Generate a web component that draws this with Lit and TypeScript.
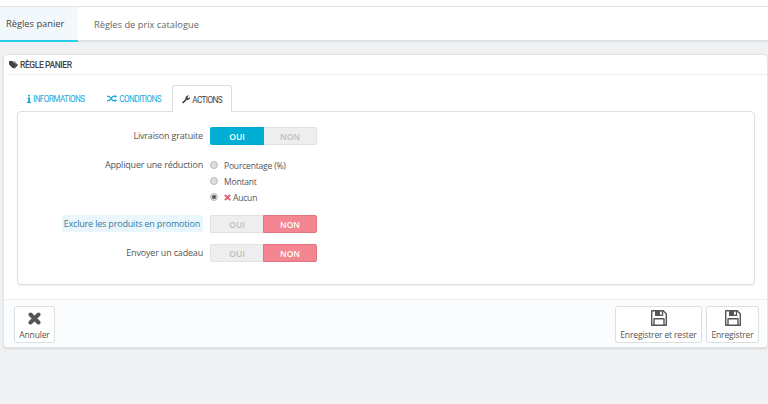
import { LitElement, html, css, svg } from "lit";
import { customElement } from "lit/decorators.js";

const floppy = svg`<svg class="ic" viewBox="0 0 16 16" width="16" height="16"><path fill="none" stroke="#555" stroke-width="1.400" stroke-linejoin="round" d="M.7.7h11.500l3.100 3.100v11.500H.7zM3 15.300V8.700h10v6.600"/><path fill="#555" fill-rule="evenodd" d="M4 0h8.200v6H4zM9 1.300v3.400h1.800V1.300z"/></svg>`;

@customElement("app-root")
export class AppRoot extends LitElement {
  static styles = css`
    :host { display: block; width: 768px; height: 404px; background: #eff1f2; font-family: "Open Sans", sans-serif; font-size: 9px; color: #555; overflow: hidden; }
    * { box-sizing: border-box; }
    .topbar { height: 42px; background: #fff; padding-top: 6px; }
    .pagetabs { height: 36px; display: flex; border-top: 1px solid #e3e5e6; border-bottom: 2px solid #dfe1e2; }
    .pt { height: 35px; padding: 0 15px 0 6px; display: flex; align-items: center; white-space: nowrap; font-size: 9.300px; color: #555; }
    .pt.on { width: 78px; background: #f2f8fb; border-bottom: 2px solid #25d0ea; color: #444; }
    .pt.off { padding-left: 16px; color: #666; }
    .wrap { padding: 12px 0 0 3px; }
    .panel { width: 765px; height: 294px; background: #fff; border: 1px solid #e2e4e5; border-radius: 4px; box-shadow: 0 1px 2px rgba(0,0,0,.12); display: flex; flex-direction: column; }
    .phead { height: 20px; margin: 0 0 0 5px; border-bottom: 1px solid #eee; display: flex; align-items: center; gap: 1px; font-family: Roboto, sans-serif; font-size: 8.500px; font-weight: 500; letter-spacing: -.4px; color: #444; }
    .tabs { display: flex; margin: 10px 0 0 13px; height: 26px; align-items: stretch; }
    .tab { display: flex; align-items: center; gap: 2px; padding: 1px 11px 0 12px; font-family: Roboto, sans-serif; font-size: 8.200px; letter-spacing: -.6px; color: #25a9dc; white-space: nowrap; }
    .tab.i { padding: 1px 11px 0 10px; width: 79px; }
    .tab.c { width: 76px; padding-left: 11px; }
    .tab.on { background: #fff; border: 1px solid #dcdfe0; border-bottom: none; border-radius: 3px 3px 0 0; color: #444; padding: 1px 9px 0; width: 60px; position: relative; z-index: 1; margin-bottom: -1px; height: 27px; }
    .box { margin: 0 0 0 13px; width: 738px; height: 174px; border: 1px solid #dcdfe0; border-radius: 4px; box-shadow: 0 1px 1px rgba(0,0,0,.06); padding-top: 15px; }
    .row { display: grid; grid-template-columns: 185px 1fr; column-gap: 7px; align-items: start; }
    .lab { text-align: right; font-size: 9px; letter-spacing: -.18px; line-height: 18px; color: #555; }
    .lab.t { line-height: 16px; }
    .lab span.h { background: #e9f6fb; color: #3a7aa0; padding: 2px 3px 2px 2px; border-radius: 2px; }
    .mt12 { margin-top: 12px; } .mt10 { margin-top: 10px; } .mt11 { margin-top: 11px; }
    .sw { display: flex; width: 107px; height: 18px; border-radius: 2px; font-size: 8.500px; font-weight: 600; }
    .sw div { flex: 1; display: flex; align-items: center; justify-content: center; }
    .offc { background: #eeeeee; color: #bdbdbd; border: 1px solid #e2e2e2; }
    .offc.l { border-radius: 2px 0 0 2px; border-right: none; }
    .offc.rt { border-radius: 0 2px 2px 0; border-left: none; }
    .sw .yes { flex: 0 0 54px; background: #00aed6; color: #fff; border-radius: 2px 0 0 2px; }
    .no { background: #f38690; color: #fff; border: 1px solid #e2737d; border-radius: 0 2px 2px 0; }
    .radios { display: flex; flex-direction: column; }
    .radio { height: 16px; display: flex; align-items: center; font-size: 8.500px; letter-spacing: -.18px; color: #555; }
    .dot { width: 8px; height: 8px; border-radius: 50%; background: #ddd; border: 1px solid #bbb; margin-right: 6px; flex: none; display: flex; align-items: center; justify-content: center; }
    .dot.c::after { content: ""; width: 4px; height: 4px; border-radius: 50%; background: #555; }
    .x { display: block; margin-right: 2px; }
    .foot { margin-top: 14px; flex: 1; background: #fbfcfd; border-top: 1px solid #eceeef; border-radius: 0 0 4px 4px; padding: 6px 8px 0 10px; display: flex; gap: 4px; }
    .btn { height: 37px; background: #fff; border: 1px solid #dcdfe0; border-radius: 3px; display: flex; flex-direction: column; align-items: center; justify-content: flex-end; padding-bottom: 1px; font-size: 8.500px; letter-spacing: -.15px; color: #555; line-height: 12px; white-space: nowrap; }
    .w41 { width: 41px; } .w87 { width: 87px; } .w53 { width: 53px; }
    .ic { display: block; margin-bottom: 3px; }
    .cancel { display: block; margin-bottom: 4px; }
    .spacer { flex: 1; }
  `;
  render() {
    return html`
      <div class="topbar"><div class="pagetabs"><div class="pt on">Règles panier</div><div class="pt off">Règles de prix catalogue</div></div></div>
      <div class="wrap"><div class="panel">
        <div class="phead">
          <svg viewBox="0 0 10 8" width="10" height="8"><path fill="#444" d="M0 0h3.500l4 4-3.500 3.500-4-4zM5 0l4 4-3.500 3.700-.7-.7L7.500 4 4.500 0z"/></svg>
          RÈGLE PANIER
        </div>
        <div class="tabs">
          <div class="tab i"><svg viewBox="0 0 4 8" width="4" height="8"><path fill="#25a9dc" d="M1 0h2v1.600H1zM.5 2.500H3v4.300h1V8H0V6.800h1V3.700H.5z"/></svg>INFORMATIONS</div>
          <div class="tab c"><svg viewBox="0 0 12 9" width="11" height="9"><path fill="none" stroke="#25a9dc" stroke-width="1.700" d="M0 2h2.500l4.500 5h2.500M0 7h2.500l4.500-5h2.500"/><path fill="#25a9dc" d="M9 0l3 2-3 2zM9 5l3 2-3 2z"/></svg>CONDITIONS</div>
          <div class="tab on"><svg viewBox="0 0 10 10" width="9" height="9"><path fill="#444" d="M0 8.500 4.200 4.300C3.800 2.500 5 .3 7.500 0c.7 0 1 .1 1.200.2L6.800 2l.2 1.200 1.200.3L10 1.700c.3 2.500-2 4.500-4.200 3.900L1.500 10z"/></svg>ACTIONS</div>
        </div>
        <div class="box">
          <div class="row"><div class="lab">Livraison gratuite</div><div class="sw"><div class="yes">OUI</div><div class="offc rt">NON</div></div></div>
          <div class="row mt12"><div class="lab t">Appliquer une réduction</div><div class="radios">
            <div class="radio"><span class="dot"></span>Pourcentage (%)</div>
            <div class="radio"><span class="dot"></span>Montant</div>
            <div class="radio"><span class="dot c"></span><svg class="x" viewBox="0 0 8 8" width="7" height="7"><path fill="none" stroke="#e4606d" stroke-width="2.200" d="M1 1l6 6M7 1 1 7"/></svg>Aucun</div>
          </div></div>
          <div class="row mt10"><div class="lab"><span class="h">Exclure les produits en promotion</span></div><div class="sw"><div class="offc l">OUI</div><div class="no">NON</div></div></div>
          <div class="row mt11"><div class="lab">Envoyer un cadeau</div><div class="sw"><div class="offc l">OUI</div><div class="no">NON</div></div></div>
        </div>
        <div class="foot">
          <div class="btn w41"><svg class="cancel" viewBox="0 0 13 13" width="13" height="13"><path fill="none" stroke="#555" stroke-width="4" stroke-linecap="round" d="M2.500 2.500l8 8M10.500 2.500l-8 8"/></svg>Annuler</div>
          <div class="spacer"></div>
          <div class="btn w87">${floppy}Enregistrer et rester</div>
          <div class="btn w53">${floppy}Enregistrer</div>
        </div>
      </div></div>`;
  }
}
